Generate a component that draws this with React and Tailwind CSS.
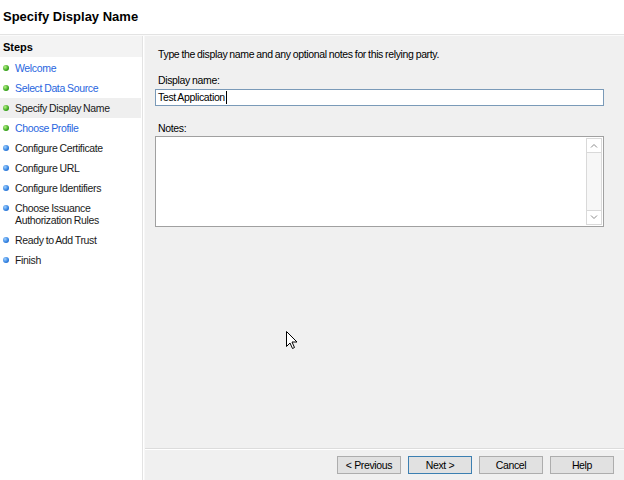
const steps = [
  { label: 'Welcome', state: 'done' },
  { label: 'Select Data Source', state: 'done' },
  { label: 'Specify Display Name', state: 'current' },
  { label: 'Choose Profile', state: 'done' },
  { label: 'Configure Certificate', state: 'todo' },
  { label: 'Configure URL', state: 'todo' },
  { label: 'Configure Identifiers', state: 'todo' },
  { label: ['Choose Issuance', 'Authorization Rules'], state: 'todo' },
  { label: 'Ready to Add Trust', state: 'todo' },
  { label: 'Finish', state: 'todo' },
];

function Dot({ green }) {
  return (
    <span
      className={`mt-[4px] w-[6px] h-[6px] rounded-full shrink-0 ${
        green
          ? 'bg-[radial-gradient(circle_at_35%_35%,#b8f08a,#3aa81c_60%,#237a10)]'
          : 'bg-[radial-gradient(circle_at_35%_35%,#9fd0ff,#2f7fe0_60%,#1b55b0)]'
      }`}
    />
  );
}

function WinButton({ children, primary }) {
  return (
    <button
      className={`w-[64px] h-[18px] text-[10.5px] leading-none text-black bg-[#e1e1e1] border ${
        primary ? 'border-[#3c7fb1]' : 'border-[#adadad]'
      }`}
    >
      {children}
    </button>
  );
}

export default function App() {
  return (
    <div className="relative w-[624px] h-[480px] flex flex-col bg-white font-['Liberation_Sans',Arial,sans-serif] text-[10.5px] tracking-[-0.35px] [word-spacing:-0.5px] text-black overflow-hidden">
      {/* title */}
      <div className="h-[35px] px-[3px] pt-[9px] border-b border-[#e3e3e3]">
        <h1 className="text-[13px] font-bold leading-[16px] tracking-normal [word-spacing:0px]">Specify Display Name</h1>
      </div>

      <div className="flex flex-1 border-t border-[#fafafa]">
        {/* steps column */}
        <div className="w-[143px] bg-white border-r border-[#e3e3e3] flex flex-col">
          <div className="h-[21px] bg-[#f3f3f3] px-[3px] pt-[1px] flex items-center font-bold text-[11px] tracking-normal">Steps</div>
          <ul className="pr-[1px] pt-[1px]">
            {steps.map((s, i) => (
              <li
                key={i}
                className={`flex gap-[6px] pl-[3px] py-[3px] leading-[12px] ${
                  s.state === 'current' ? 'bg-[#efefef]' : ''
                } ${Array.isArray(s.label) ? 'min-h-[32px]' : 'h-[20px]'}`}
              >
                <Dot green={s.state !== 'todo'} />
                <span className={`mt-[1px] ${s.state === 'done' ? 'text-[#2866e0]' : 'text-[#1a1a1a]'}`}>
                  {Array.isArray(s.label) ? s.label.map((l) => <div key={l}>{l}</div>) : s.label}
                </span>
              </li>
            ))}
          </ul>
        </div>

        {/* main pane */}
        <div className="flex-1 flex flex-col bg-[#f0f0f0] border-l border-[#f7f7f7] ml-[1px]">
          <div className="flex-1 pl-[10px] pr-[20px] pt-[12px]">
            <p className="pl-[3px] leading-[13px]">Type the display name and any optional notes for this relying party.</p>

            <label className="block mt-[13px] pl-[3px] leading-[13px]">Display name:</label>
            <div className="mt-[2px] h-[17px] bg-white border border-[#7a9ab8] flex items-center px-[2px]">
              <span className="leading-none">Test Application</span>
              <span className="w-[1px] h-[13px] bg-black ml-[1px]" />
            </div>

            <label className="block mt-[16px] pl-[3px] leading-[13px]">Notes:</label>
            <div className="mt-[1px] h-[91px] bg-white border border-[#a0a0a0] flex justify-end">
              <div className="w-[16px] my-[1px] mr-[1px] flex flex-col border border-[#d9d9d9] bg-white">
                <div className="h-[14px] flex items-center justify-center border-b border-[#d9d9d9]">
                  <svg width="8" height="5" viewBox="0 0 8 5">
                    <path d="M1 4.5 L4 1.5 L7 4.5" fill="none" stroke="#8a8a8a" strokeWidth="1" />
                  </svg>
                </div>
                <div className="flex-1 bg-[#f7f7f7]" />
                <div className="h-[14px] flex items-center justify-center border-t border-[#d9d9d9]">
                  <svg width="8" height="5" viewBox="0 0 8 5">
                    <path d="M1 0.5 L4 3.5 L7 0.5" fill="none" stroke="#8a8a8a" strokeWidth="1" />
                  </svg>
                </div>
              </div>
            </div>
          </div>

          {/* button bar */}
          <div className="h-[32px] border-t border-[#dcdcdc] shadow-[inset_0_1px_0_#ffffff] flex items-start justify-end gap-[7px] pt-[7px] pr-[10px]">
            <WinButton>&lt; Previous</WinButton>
            <WinButton primary>Next &gt;</WinButton>
            <WinButton>Cancel</WinButton>
            <WinButton>Help</WinButton>
          </div>
        </div>
      </div>

      {/* mouse pointer captured in the screenshot */}
      <svg className="absolute left-[286px] top-[331px]" width="12" height="19" viewBox="0 0 12 19">
        <path
          d="M0.5 0.5 L0.5 15.5 L4 12 L6.5 17.5 L8.5 16.5 L6 11 L11 11 Z"
          fill="#ffffff"
          stroke="#000000"
          strokeWidth="1"
          strokeLinejoin="miter"
        />
      </svg>
    </div>
  );
}
